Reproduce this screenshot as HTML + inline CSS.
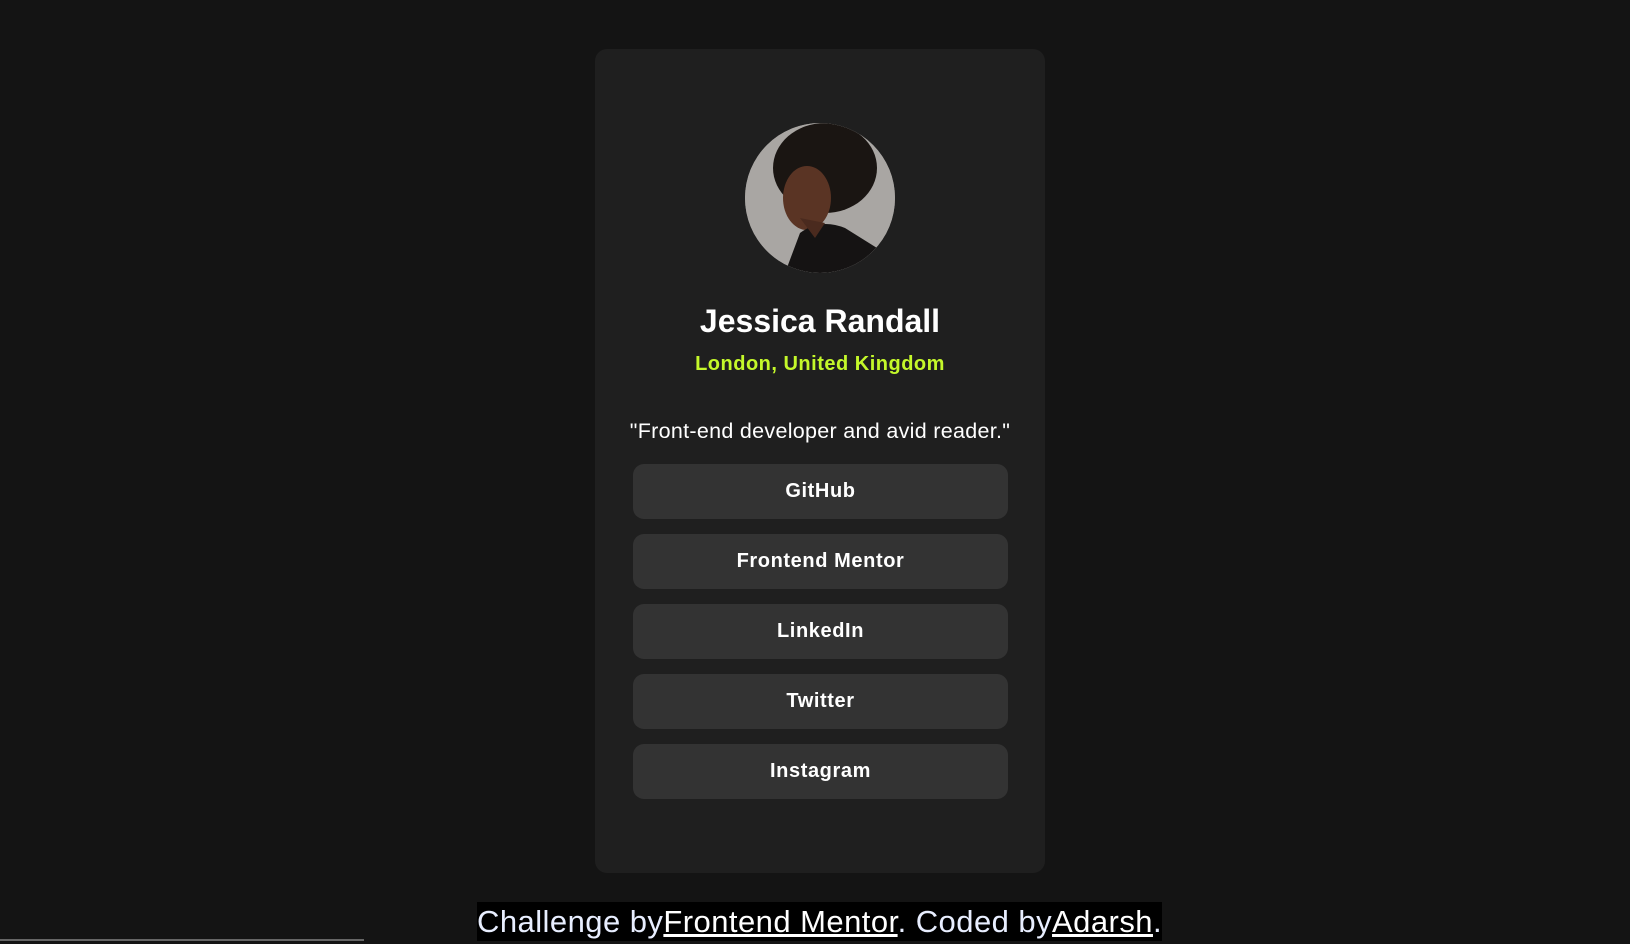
<!DOCTYPE html>
<html><head><meta charset="utf-8"><style>
html,body{margin:0;padding:0;}
body{width:1630px;height:941px;background:#141414;position:relative;overflow:hidden;font-family:"Liberation Sans",Arial,sans-serif;}
.card{position:absolute;left:595px;top:49px;width:450px;height:824px;background:#1f1f1f;border-radius:12px;}
.av{position:absolute;left:150px;top:74px;width:150px;height:150px;border-radius:50%;overflow:hidden;background:#9a9794;}
.name{position:absolute;left:0;width:450px;text-align:center;color:#fff;font-weight:bold;font-size:32px;}
.loc{position:absolute;left:0;width:450px;text-align:center;color:#c4f82a;font-weight:bold;font-size:20px;letter-spacing:0.5px;}
.q{position:absolute;left:0;width:450px;text-align:center;color:#fff;font-size:21.5px;letter-spacing:0.3px;}
.btn{position:absolute;left:38px;width:375px;height:55px;background:#333;border-radius:11px;color:#fff;font-weight:bold;font-size:20px;line-height:55px;text-align:center;letter-spacing:0.6px;}
.foot{position:absolute;left:477px;top:902px;width:685px;height:39px;background:#000;}
.ft{position:absolute;left:477px;top:900px;font-size:31px;color:#e8eeff;white-space:nowrap;line-height:44px;letter-spacing:0.45px;}
.ft a{color:#fff;text-decoration:underline;}
.sb{position:absolute;left:0;top:939px;width:364px;height:2px;background:#666;}
</style></head><body>
<div class="card">
 <div class="av"><svg width="150" height="150" viewBox="0 0 150 150">
  <rect width="150" height="150" fill="#a9a6a3"/>
  <ellipse cx="80" cy="45" rx="52" ry="45" fill="#1a1512"/>
  <ellipse cx="62" cy="75" rx="24" ry="32" fill="#5a3424"/>
  <path d="M40 150 L55 110 Q75 95 100 105 L140 130 L150 150Z" fill="#151313"/>
  <path d="M55 95 L70 115 L80 100Z" fill="#4a2a1e"/>
 </svg></div>
 <div class="name" style="top:254px;">Jessica Randall</div>
 <div class="loc" style="top:304px;">London, United Kingdom</div>
 <div class="q" style="top:370px;">"Front-end developer and avid reader."</div>
 <div class="btn" style="top:415px;">GitHub</div>
 <div class="btn" style="top:485px;">Frontend Mentor</div>
 <div class="btn" style="top:555px;">LinkedIn</div>
 <div class="btn" style="top:625px;">Twitter</div>
 <div class="btn" style="top:695px;">Instagram</div>
</div>
<div class="foot"></div>
<div class="ft">Challenge by<a>Frontend Mentor</a>. Coded by<a>Adarsh</a>.</div>
<div class="sb"></div>
</body></html>
